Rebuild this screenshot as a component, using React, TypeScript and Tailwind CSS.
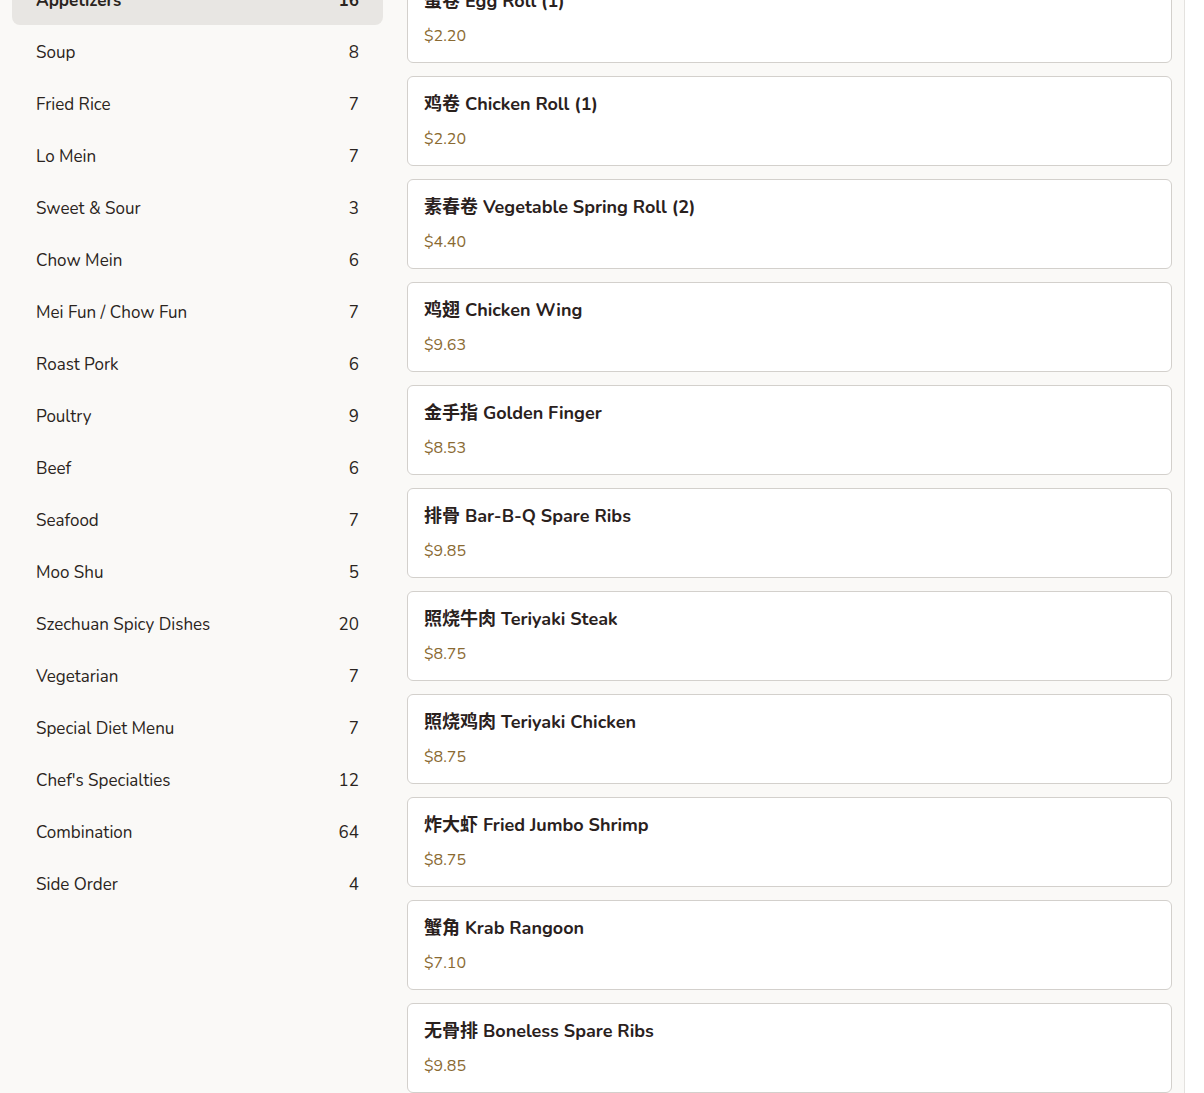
import React from "react";

const categories: { name: string; count: number }[] = [
  { name: "Appetizers", count: 16 },
  { name: "Soup", count: 8 },
  { name: "Fried Rice", count: 7 },
  { name: "Lo Mein", count: 7 },
  { name: "Sweet & Sour", count: 3 },
  { name: "Chow Mein", count: 6 },
  { name: "Mei Fun / Chow Fun", count: 7 },
  { name: "Roast Pork", count: 6 },
  { name: "Poultry", count: 9 },
  { name: "Beef", count: 6 },
  { name: "Seafood", count: 7 },
  { name: "Moo Shu", count: 5 },
  { name: "Szechuan Spicy Dishes", count: 20 },
  { name: "Vegetarian", count: 7 },
  { name: "Special Diet Menu", count: 7 },
  { name: "Chef's Specialties", count: 12 },
  { name: "Combination", count: 64 },
  { name: "Side Order", count: 4 },
];

const items: { zh: string; en: string; price: string }[] = [
  { zh: "蛋卷", en: "Egg Roll (1)", price: "$2.20" },
  { zh: "鸡卷", en: "Chicken Roll (1)", price: "$2.20" },
  { zh: "素春卷", en: "Vegetable Spring Roll (2)", price: "$4.40" },
  { zh: "鸡翅", en: "Chicken Wing", price: "$9.63" },
  { zh: "金手指", en: "Golden Finger", price: "$8.53" },
  { zh: "排骨", en: "Bar-B-Q Spare Ribs", price: "$9.85" },
  { zh: "照烧牛肉", en: "Teriyaki Steak", price: "$8.75" },
  { zh: "照烧鸡肉", en: "Teriyaki Chicken", price: "$8.75" },
  { zh: "炸大虾", en: "Fried Jumbo Shrimp", price: "$8.75" },
  { zh: "蟹角", en: "Krab Rangoon", price: "$7.10" },
  { zh: "无骨排", en: "Boneless Spare Ribs", price: "$9.85" },
];

export default function App() {
  return (
    <div
      className="flex h-[1093px] w-full overflow-hidden bg-[#faf9f7] text-[#2a2420]"
      style={{ fontFamily: '"Nunito", "Lato", "Noto Sans CJK SC", sans-serif' }}
    >
      {/* Category sidebar (scrolled a little) */}
      <aside className="w-[395px] shrink-0 px-3">
        <ul className="-mt-[27px] flex flex-col">
          {categories.map((c, i) => (
            <li
              key={c.name}
              className={
                i === 0
                  ? "flex h-[52px] items-center justify-between rounded-lg bg-[#e8e6e3] px-6 pt-1 text-[17px] font-bold"
                  : "flex h-[52px] items-center justify-between rounded-lg px-6 pt-1 text-[17px]"
              }
            >
              <span>{c.name}</span>
              <span>{c.count}</span>
            </li>
          ))}
        </ul>
      </aside>

      {/* Menu items */}
      <main className="flex-1 px-3">
        <div className="-mt-[27px] flex flex-col gap-[13px]">
          {items.map((it) => (
            <div
              key={it.en}
              className="flex h-[90px] flex-col gap-[11px] rounded-md border border-[#d3d0cc] bg-white px-4 pt-[15px]"
            >
              <div className="text-[18px] font-bold leading-6 text-[#2a211d]">
                {it.zh} {it.en}
              </div>
              <div className="text-[16px] leading-6 text-[#8a6a32]">{it.price}</div>
            </div>
          ))}
        </div>
      </main>

      {/* Scrollbar gutter */}
      <div className="w-5 shrink-0 border-l border-[#e4e2df] bg-white" />
    </div>
  );
}
